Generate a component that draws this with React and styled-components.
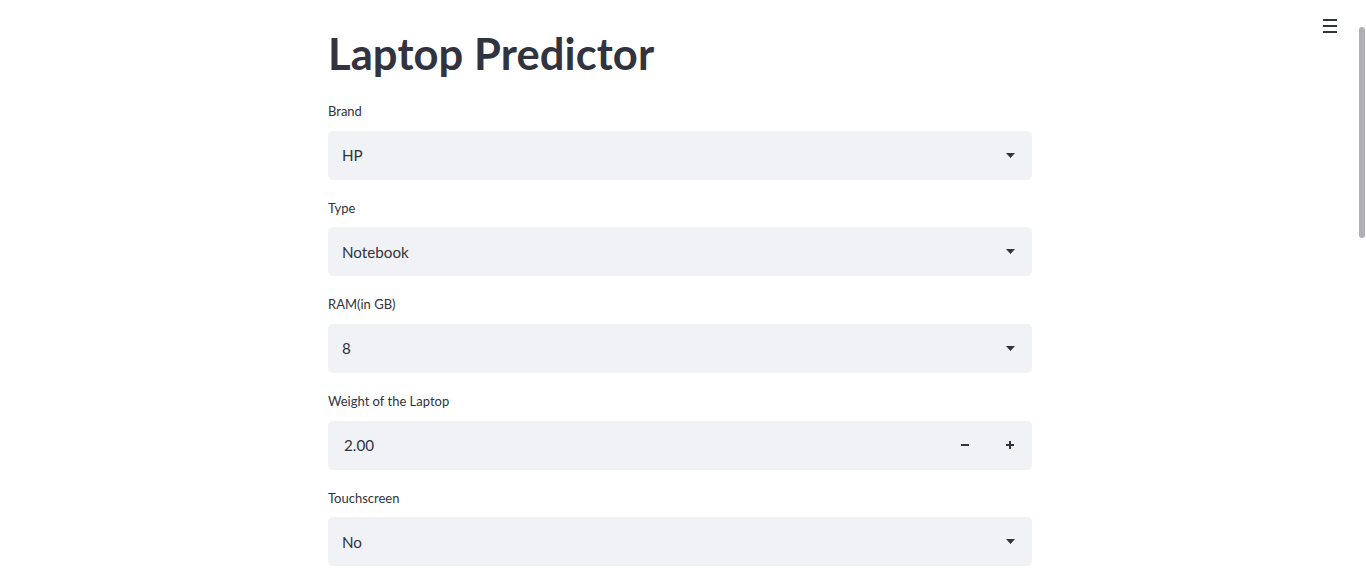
import React, { useState } from 'react'
import styled, { createGlobalStyle } from 'styled-components'

const GlobalStyle = createGlobalStyle`
html, body {
    margin: 0;
    padding: 0;
    background: #ffffff;
    overflow: hidden;
}
body {
    font-family: Lato, "Source Sans Pro", "Noto Sans", sans-serif;
    color: rgb(49, 51, 63);
}
`

const Page = styled.div`
height: 580px;
display: flex;
justify-content: center;
position: relative;
`

const Main = styled.div`
width: 704px;
padding-top: 29px;
margin-left: -6px;
display: flex;
flex-direction: column;
`

const Title = styled.h1`
margin: 0 0 24px 0;
font-size: 43.5px;
font-weight: 700;
line-height: 48px;
color: rgb(49, 51, 63);
letter-spacing: 0.1px;
`

const Field = styled.div`
display: flex;
flex-direction: column;
margin-bottom: 18.2px;
`

const Label = styled.label`
font-size: 13px;
line-height: 20px;
margin-bottom: 9.5px;
color: rgb(49, 51, 63);
`

const Box = styled.div`
height: 49px;
background: rgb(240, 242, 246);
border-radius: 5px;
display: flex;
align-items: center;
font-size: 15.2px;
color: rgb(49, 51, 63);
`

const Value = styled.span`
flex: 1;
padding-left: ${p => p.$pad || 14}px;
`

const Caret = styled.span`
width: 44px;
display: flex;
justify-content: center;
`

const StepButton = styled.button`
width: 45px;
height: 100%;
border: none;
background: transparent;
display: flex;
align-items: center;
justify-content: center;
cursor: pointer;
padding: 0;
`

const Menu = styled.div`
position: absolute;
top: 19px;
right: 29px;
width: 14px;
display: flex;
flex-direction: column;
gap: 4px;
span {
    height: 2px;
    background: rgb(49, 51, 63);
}
`

const ScrollThumb = styled.div`
position: absolute;
top: 27px;
right: 1px;
width: 6px;
height: 211px;
border-radius: 3px;
background: rgb(176, 176, 181);
`

function Triangle() {
    return (
        <svg width="9" height="5" viewBox="0 0 9 5">
            <path d="M0 0 H9 L4.5 5 Z" fill="rgb(49,51,63)" />
        </svg>
    )
}

function SelectField({ label, value }) {
    return (
        <Field>
            <Label>{label}</Label>
            <Box>
                <Value>{value}</Value>
                <Caret><Triangle /></Caret>
            </Box>
        </Field>
    )
}

export default function App() {
    const [weight, setWeight] = useState(2)
    return (
        <Page>
            <GlobalStyle />
            <Main>
                <Title>Laptop Predictor</Title>
                <SelectField label="Brand" value="HP" />
                <SelectField label="Type" value="Notebook" />
                <SelectField label="RAM(in GB)" value="8" />
                <Field>
                    <Label>Weight of the Laptop</Label>
                    <Box>
                        <Value $pad={16}>{weight.toFixed(2)}</Value>
                        <StepButton onClick={() => setWeight(w => w - 0.01)}>
                            <svg width="10" height="10" viewBox="0 0 10 10">
                                <rect x="1" y="4" width="8" height="2" fill="rgb(49,51,63)" />
                            </svg>
                        </StepButton>
                        <StepButton onClick={() => setWeight(w => w + 0.01)}>
                            <svg width="10" height="10" viewBox="0 0 10 10">
                                <rect x="1" y="4" width="8" height="2" fill="rgb(49,51,63)" />
                                <rect x="4" y="1" width="2" height="8" fill="rgb(49,51,63)" />
                            </svg>
                        </StepButton>
                    </Box>
                </Field>
                <SelectField label="Touchscreen" value="No" />
            </Main>
            <Menu><span /><span /><span /></Menu>
            <ScrollThumb />
        </Page>
    )
}
